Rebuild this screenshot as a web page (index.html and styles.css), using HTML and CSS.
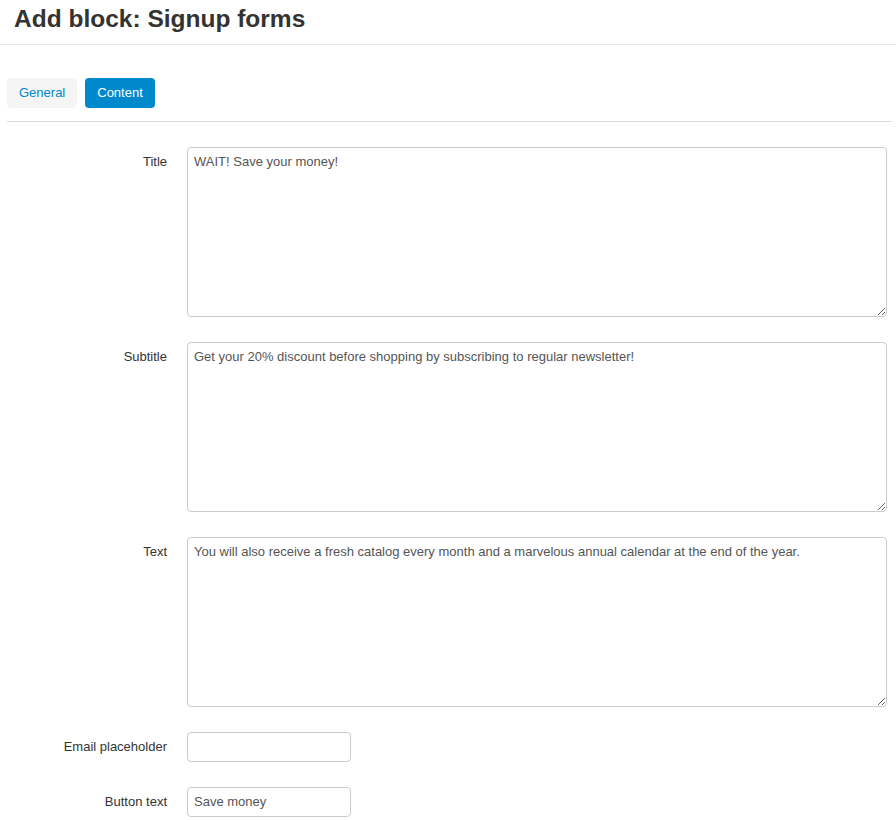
FILE: index.html
```html
<!DOCTYPE html>
<html>
<head>
<meta charset="utf-8">
<link rel="stylesheet" href="styles.css">
</head>
<body>
<header class="page-header">
  <h1 class="page-title">Add block: Signup forms</h1>
</header>
<main class="content">
  <nav class="tabs">
    <a class="tab">General</a>
    <a class="tab tab-active">Content</a>
  </nav>
  <form class="form">
    <div class="row">
      <label class="label">Title</label>
      <textarea class="textarea">WAIT! Save your money!</textarea>
    </div>
    <div class="row">
      <label class="label">Subtitle</label>
      <textarea class="textarea">Get your 20% discount before shopping by subscribing to regular newsletter!</textarea>
    </div>
    <div class="row">
      <label class="label">Text</label>
      <textarea class="textarea">You will also receive a fresh catalog every month and a marvelous annual calendar at the end of the year.</textarea>
    </div>
    <div class="row row-input">
      <label class="label">Email placeholder</label>
      <input class="input" type="text" value="">
    </div>
    <div class="row row-input">
      <label class="label">Button text</label>
      <input class="input" type="text" value="Save money">
    </div>
  </form>
</main>
</body>
</html>
```

FILE: styles.css
```css
* { box-sizing: border-box; }
html, body { margin: 0; padding: 0; background: #fff; }
body {
  font-family: "Liberation Sans", Arial, sans-serif;
  font-size: 13px;
  color: #333;
  overflow: hidden;
}
.page-header {
  height: 45px;
  border-bottom: 1px solid #e8e8e8;
  padding: 0 14px;
}
.page-title {
  margin: 0;
  font-size: 24.5px;
  line-height: 38px;
  font-weight: bold;
  color: #333;
}
.content {
  padding: 33px 4px 0 7px;
}
.tabs {
  display: flex;
  gap: 8px;
  padding-bottom: 13px;
  border-bottom: 1px solid #dcdcdc;
}
.tab {
  display: block;
  height: 30px;
  line-height: 30px;
  padding: 0 12px;
  border-radius: 4px;
  background: #f5f5f5;
  color: #0088cc;
  font-size: 13px;
}
.tab-active {
  background: #0088cc;
  color: #fff;
}
.form {
  padding: 25px 5px 0 0;
  display: flex;
  flex-direction: column;
  gap: 25px;
}
.row {
  display: grid;
  grid-template-columns: 160px 1fr;
  column-gap: 20px;
  align-items: start;
}
.label {
  text-align: right;
  padding-top: 7px;
  line-height: 16px;
  color: #333;
}
.textarea {
  display: block;
  width: 700px;
  height: 170px;
  margin: 0;
  padding: 6px 6px;
  border: 1px solid #ccc;
  border-radius: 4px;
  font-family: "Liberation Sans", Arial, sans-serif;
  font-size: 13px;
  line-height: 16px;
  color: #555;
  resize: both;
  background: #fff;
}
.row-input .label { padding-top: 7px; }
.input {
  display: block;
  width: 164px;
  height: 30px;
  margin: 0;
  padding: 3px 6px 5px;
  border: 1px solid #ccc;
  border-radius: 4px;
  font-family: "Liberation Sans", Arial, sans-serif;
  font-size: 13px;
  color: #555;
  background: #fff;
}
```
